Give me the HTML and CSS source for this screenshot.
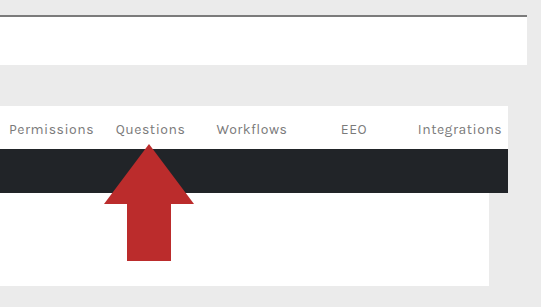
FILE: index.html
```html
<!DOCTYPE html>
<html>
<head>
<meta charset="utf-8">
<link rel="stylesheet" href="styles.css">
</head>
<body>
<div class="page">
  <div class="header-card"></div>
  <div class="settings">
    <nav class="tabs">
      <span class="tab">Permissions</span>
      <span class="tab">Questions</span>
      <span class="tab">Workflows</span>
      <span class="tab">EEO</span>
      <span class="tab">Integrations</span>
    </nav>
    <div class="darkbar"></div>
    <div class="content"></div>
  </div>
  <svg class="arrow" width="92" height="119" viewBox="0 0 92 119">
    <polygon points="45,0 90,60 67,60 67,117 23,117 23,60 0,60" fill="#bb2c2c"/>
  </svg>
</div>
</body>
</html>
```
FILE: styles.css
```css
html, body {
  margin: 0;
  padding: 0;
  background: #ebebeb;
}
.page {
  position: relative;
  width: 541px;
  height: 307px;
  padding-top: 15px;
  box-sizing: border-box;
}
.header-card {
  width: 527px;
  height: 48px;
  background: #ffffff;
  border-top: 2px solid #7b7b7b;
}
.settings {
  margin-top: 41px;
  width: 508px;
}
.tabs {
  height: 43px;
  background: #ffffff;
  display: grid;
  grid-template-columns: 103px 95px 108px 96px 116px;
  align-items: center;
  overflow: visible;
  font-family: "Karla", "Noto Sans", sans-serif;
  font-size: 14px;
  color: #7a7a7a;
  letter-spacing: 0.5px;
}
.tab {
  text-align: center;
  white-space: nowrap;
  padding-top: 3px;
}
.darkbar {
  height: 44px;
  background: #212428;
}
.content {
  width: 489px;
  height: 93px;
  background: #ffffff;
}
.arrow {
  position: absolute;
  left: 104px;
  top: 144px;
}
```
